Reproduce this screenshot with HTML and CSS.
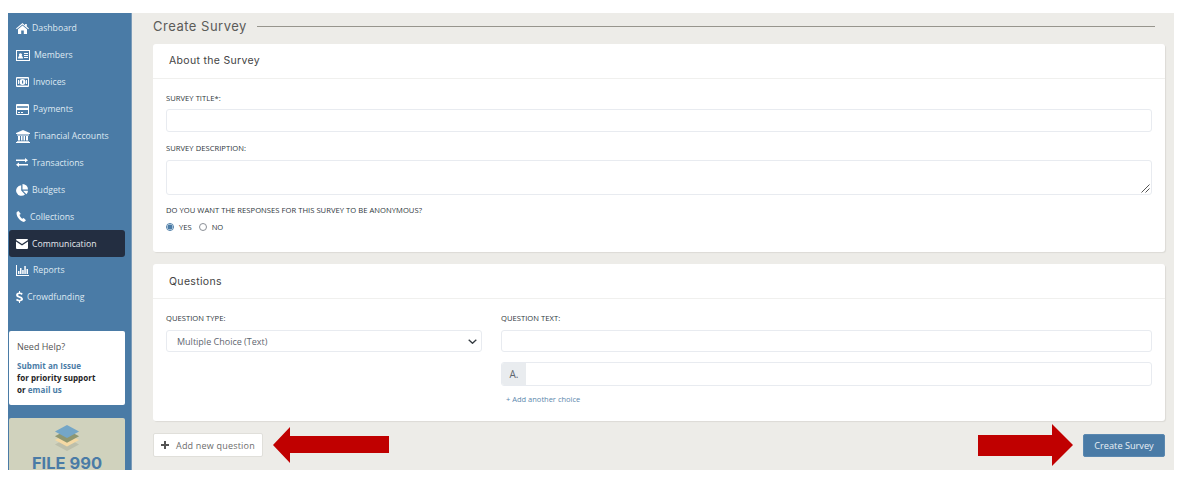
FILE: index.html
```html
<!DOCTYPE html>
<html lang="en">
<head>
<meta charset="utf-8">
<title>Create Survey</title>
<link rel="stylesheet" href="styles.css">
</head>
<body>
<div class="app">
  <aside class="sidebar">
    <nav class="nav">
      <a class="nav-item"><svg class="ico" width="13" height="11" viewBox="0 0 13 11"><path d="M6.5 0 0 5.4l.7.8L6.500 1.500l5.800 4.700.7-.8-2.200-1.800V1h-1.700v1.500zM2 6.300V11h3.200V7.600h2.600V11H11V6.300L6.500 2.600z"/></svg><span class="g-dash">Dashboard</span></a>
      <a class="nav-item"><svg class="ico" width="14" height="11" viewBox="0 0 14 11"><path fill-rule="evenodd" d="M0 0h14v11H0zM1 1v9h12V1zM2 8.500c0-1.500.7-2.200 1.500-2.400a1.600 1.600 0 1 1 2 0c.8.2 1.500.9 1.500 2.400zM8 3h4v1H8zM8 5h4v1H8zM8 7h4v1H8z"/></svg><span class="g-wide">Members</span></a>
      <a class="nav-item"><svg class="ico" width="13" height="10" viewBox="0 0 13 10"><path fill-rule="evenodd" d="M1 0h11a1 1 0 0 1 1 1v8a1 1 0 0 1-1 1H1a1 1 0 0 1-1-1V1a1 1 0 0 1 1-1zM1 1.500v7h11v-7zM6.500 2a3 3 0 1 1 0 6 3 3 0 0 1 0-6zM2 3h1v4H2zM10 3h1v4h-1z"/><rect class="ico-cut" x="6" y="3.500" width="1.200" height="3"/></svg><span class="g-mid">Invoices</span></a>
      <a class="nav-item"><svg class="ico" width="13" height="11" viewBox="0 0 13 11"><path fill-rule="evenodd" d="M1 0h11a1 1 0 0 1 1 1v9a1 1 0 0 1-1 1H1a1 1 0 0 1-1-1V1a1 1 0 0 1 1-1zM1 2.200v1.600h11V2.200zM1 6v4h11V6zM2 8h2v1H2zM5 8h2v1H5z"/></svg><span class="g-mid">Payments</span></a>
      <a class="nav-item"><svg class="ico" width="14" height="13" viewBox="0 0 14 13"><path d="M7 0 0 3v1h14V3zM1 4.500h12v1H1zM2 6h2v4.500H2zM5 6h1.500v4.500H5zM7.500 6H9v4.500H7.500zM10 6h2v4.500h-2zM1 11h12v.8H1zM0 12h14v1H0z"/></svg><span class="g-wide">Financial Accounts</span></a>
      <a class="nav-item"><svg class="ico" width="12" height="9" viewBox="0 0 12 9"><path d="M0 1.500h9V0l3 2.250-3 2.250V3H0zM12 6H3V4.500L0 6.750 3 9V7.500h9z"/></svg><span class="g-mid">Transactions</span></a>
      <a class="nav-item"><svg class="ico" width="12" height="12" viewBox="0 0 12 12"><path d="M5.200 1.200V6.600L9 10.400A5.300 5.300 0 1 1 5.200 1.200zM6.500 0A5.500 5.500 0 0 1 12 5.500H6.500zM7 6.800h5a5.500 5.500 0 0 1-1.600 3.500z"/></svg><span class="g-mid">Budgets</span></a>
      <a class="nav-item"><svg class="ico" width="10" height="11" viewBox="0 0 10 11"><path d="M2.500 0 .8.900C-.5 4 3.200 10.300 8 11l2-1.700L7.700 6.900 6.200 7.800C5 7 3.800 5.300 3.500 3.800L4.800 3z"/></svg><span class="g-mid">Collections</span></a>
      <a class="nav-item active"><svg class="ico" width="12" height="10" viewBox="0 0 12 10"><path d="M1 0h10a1 1 0 0 1 1 1L6 5 0 1a1 1 0 0 1 1-1zM0 2.400 6 6.400l6-4V9a1 1 0 0 1-1 1H1a1 1 0 0 1-1-1z"/></svg><span class="g-mid">Communication</span></a>
      <a class="nav-item"><svg class="ico" width="13" height="11" viewBox="0 0 13 11"><path d="M0 0h1v10h12v1H0zM2 6h1.500v3H2zM4 3h1.500v6H4zM6.200 5h1.500v4H6.200zM8.300 1h1.500v8H8.300zM10.500 4H12v5h-1.500z"/></svg><span class="g-wide">Reports</span></a>
      <a class="nav-item"><svg class="ico" width="7" height="12" viewBox="0 0 7 12"><path d="M3 0h1v1.500c1 .1 2 .5 2.700 1L5.900 4C5 3.400 4.200 3.100 3.300 3.100c-.8 0-1.200.3-1.200.8 0 1.500 4.900 1 4.900 4.200 0 1.300-1 2.200-3 2.400V12H3v-1.500c-1.200-.1-2.300-.6-3-1.200l.9-1.500c.9.700 1.800 1.100 2.700 1.100.9 0 1.400-.3 1.400-.8C5 6.500.1 7 .1 4 .100 2.700 1.200 1.700 3 1.500z"/></svg><span class="g-mid">Crowdfunding</span></a>
    </nav>
    <div class="help">
      <p class="help-title">Need Help?</p>
      <p class="help-text"><a class="link">Submit an Issue</a><br>for priority support<br>or <a class="link">email us</a></p>
    </div>
    <div class="promo">
      <svg class="stack" width="26" height="28" viewBox="0 0 28 30">
        <path d="M14 14 27 21 14 28 1 21z" fill="#bdbfab"/>
        <path d="M14 9 27 16 14 23 1 16z" fill="#f4d9a4"/>
        <path d="M14 5 27 12 14 19 1 12z" fill="#8f9771"/>
        <path d="M14 0 27 7 14 14 1 7z" fill="#74a6c7"/>
      </svg>
      <div class="promo-name">FILE 990</div>
    </div>
  </aside>
  <main class="main">
    <div class="page-head">
      <h1 class="page-title">Create Survey</h1>
      <span class="page-rule"></span>
    </div>
    <section class="card card-about">
      <h2 class="card-head">About the Survey</h2>
      <div class="card-body">
        <label class="lbl">SURVEY TITLE*:</label>
        <div class="input"></div>
        <label class="lbl lbl-desc">SURVEY DESCRIPTION:</label>
        <div class="input textarea">
          <svg class="grip" width="9" height="9" viewBox="0 0 9 9"><path d="M8.500.5.500 8.500M8.500 4.500l-4 4" stroke="#555" fill="none"/></svg>
        </div>
        <label class="lbl lbl-anon">DO YOU WANT THE RESPONSES FOR THIS SURVEY TO BE ANONYMOUS?</label>
        <div class="radios">
          <span class="radio on"></span><span class="radio-label">YES</span>
          <span class="radio"></span><span class="radio-label">NO</span>
        </div>
      </div>
    </section>
    <section class="card card-questions">
      <h2 class="card-head">Questions</h2>
      <div class="card-body q-grid">
        <div class="q-left">
          <label class="lbl">QUESTION TYPE:</label>
          <div class="input select">
            <span>Multiple Choice (Text)</span>
            <svg width="9" height="5" viewBox="0 0 9 5"><path d="M.7.700 4.500 4.300 8.300.7" fill="none" stroke="#343a40" stroke-width="1.300"/></svg>
          </div>
        </div>
        <div class="q-right">
          <label class="lbl">QUESTION TEXT:</label>
          <div class="input"></div>
          <div class="input group"><span class="addon">A.</span></div>
          <a class="add-choice">+ Add another choice</a>
        </div>
      </div>
    </section>
    <div class="actions">
      <button class="btn-add"><svg width="8" height="8" viewBox="0 0 8 8"><path d="M3 0h2v3h3v2H5v3H3V5H0V3h3z" fill="#555"/></svg><span>Add new question</span></button>
      <svg class="arrow-l" width="116" height="36" viewBox="0 0 116 36"><path d="M0 18 17 0v9h99v17H17v10z" fill="#c00000"/></svg>
      <svg class="arrow-r" width="95" height="42" viewBox="0 0 95 42"><path d="M95 21 74 0v11H0v21h74v10z" fill="#c00000"/></svg>
      <button class="btn-create">Create Survey</button>
    </div>
  </main>
</div>
</body>
</html>
```
FILE: styles.css
```css
* { box-sizing: border-box; }
html, body { margin: 0; padding: 0; background: #fff; }
body { padding: 13px 9px 11px 8px; height: 481px; overflow: hidden; font-family: "Open Sans", sans-serif; }
.app { display: flex; height: 457px; overflow: hidden; background: #edece8; }

.sidebar { width: 124px; flex: none; background: #4a7ba6; border-right: 1px solid #7c9cb9; padding: 2px 6px 0 1px; display: flex; flex-direction: column; }
.nav { display: flex; flex-direction: column; }
.nav-item { height: 26.900px; display: flex; align-items: center; padding-left: 7px; border-radius: 3px; color: #dfe9f2; font-size: 8.700px; }
.nav-item .ico { fill: #fff; flex: none; }
.nav-item .ico-cut { fill: #4a7ba6; }
.nav-item.active { background: #232e41; color: #e6e9ee; }
.g-dash { margin-left: 3px; }
.g-mid { margin-left: 4px; }
.g-wide { margin-left: 4px; }

.help { margin-top: 20px; height: 74px; background: #fff; border-radius: 2px; padding: 10px 8px 0; font-size: 8px; line-height: 12.300px; color: #222; font-weight: 700; flex: none; }
.help-title { margin: 0 0 7px; font-size: 9px; font-weight: 400; color: #555; line-height: 12px; }
.help-text { margin: 0; letter-spacing: .05px; }
.link { color: #4a7ba6; }
.promo { margin-top: 13px; height: 60px; flex: none; background: #d0d2bd; border-radius: 2px; display: flex; flex-direction: column; align-items: center; padding-top: 7px; }
.stack { flex: none; }
.promo-name { margin-top: 1px; font-size: 16.500px; font-weight: 700; color: #4a7ba6; line-height: 18px; font-family: "Inter", sans-serif; }

.main { flex: 1; min-width: 0; padding: 0 9px 0 21px; display: flex; flex-direction: column; }
.page-head { height: 31px; flex: none; display: flex; align-items: center; padding-right: 10px; padding-bottom: 5px; gap: 10px; }
.page-title { margin: 0; font: 400 13px "Inter", sans-serif; color: #5b5b58; letter-spacing: .5px; white-space: nowrap; }
.page-rule { flex: 1; height: 1px; background: #97958d; }

.card { background: #fff; border-radius: 3px; box-shadow: 1px 1px 1px #dcdbd6; flex: none; }
.card-about { height: 208px; }
.card-questions { height: 157px; margin-top: 12px; }
.card-head { margin: 0; height: 35px; padding: 0 16px 2px; display: flex; align-items: center; font: 400 10.500px "Inter", sans-serif; color: #444; border-bottom: 1px solid #f0f0ee; letter-spacing: .32px; }
.card-questions .card-head { padding-bottom: 0; }
.card-body { padding: 14px 13px 0; }
.lbl { display: block; font-size: 7.600px; line-height: 11px; font-weight: 500; color: #2f3740; white-space: nowrap; letter-spacing: .04px; }
.input { display: flex; align-items: center; height: 23px; margin-top: 5px; background: #fff; border: 1px solid #e8ebf0; border-radius: 3px; }
.lbl-desc { margin-top: 11px; }
.textarea { height: 35px; position: relative; margin-top: 6px; }
.grip { position: absolute; right: 1px; bottom: 1px; }
.lbl-anon { margin-top: 10px; }
.radios { display: flex; align-items: center; margin-top: 5px; height: 12px; }
.radio { width: 8px; height: 8px; border-radius: 50%; border: 1px solid #8a8f96; background: #fff; flex: none; }
.radio.on { border-color: #4a7ba6; background: radial-gradient(circle, #4a7ba6 2.200px, #fff 2.800px); }
.radio-label { font-size: 7.600px; font-weight: 500; color: #2f3740; margin: 0 7px 0 5px; }

.q-grid { display: flex; gap: 19px; padding-top: 14px; }
.q-left { width: 316px; flex: none; }
.q-right { flex: 1; min-width: 0; }
.q-grid .input { margin-top: 6px; height: 22px; }
.select { justify-content: space-between; padding: 0 4px 0 10px; font-size: 9px; color: #5f6770; }
.q-grid .group { margin-top: 10px; height: 24px; overflow: hidden; }
.addon { width: 24px; height: 100%; background: #e9ecef; display: flex; align-items: center; justify-content: center; font-size: 10px; color: #5f6770; }
.add-choice { display: block; margin: 8px 0 0 5px; font-size: 7.500px; line-height: 11px; color: #5c88ad; }

.actions { display: flex; align-items: center; margin-top: 11px; height: 26px; flex: none; }
.btn-add { height: 24px; width: 110px; display: flex; align-items: center; gap: 7px; padding: 0 0 0 7px; background: #fff; border: 1px solid #e0dfda; border-radius: 2px; font: 9px "Open Sans", sans-serif; color: #6c6c6c; letter-spacing: .2px; white-space: nowrap; }
.arrow-l { margin-left: 10px; flex: none; }
.arrow-r { margin-left: auto; flex: none; }
.btn-create { margin-left: 10px; width: 82px; height: 23px; background: #4a7ba6; border: 1px solid #5a88b0; border-radius: 2px; font: 9.200px "Open Sans", sans-serif; color: #e8eff5; padding: 0; flex: none; }
```
